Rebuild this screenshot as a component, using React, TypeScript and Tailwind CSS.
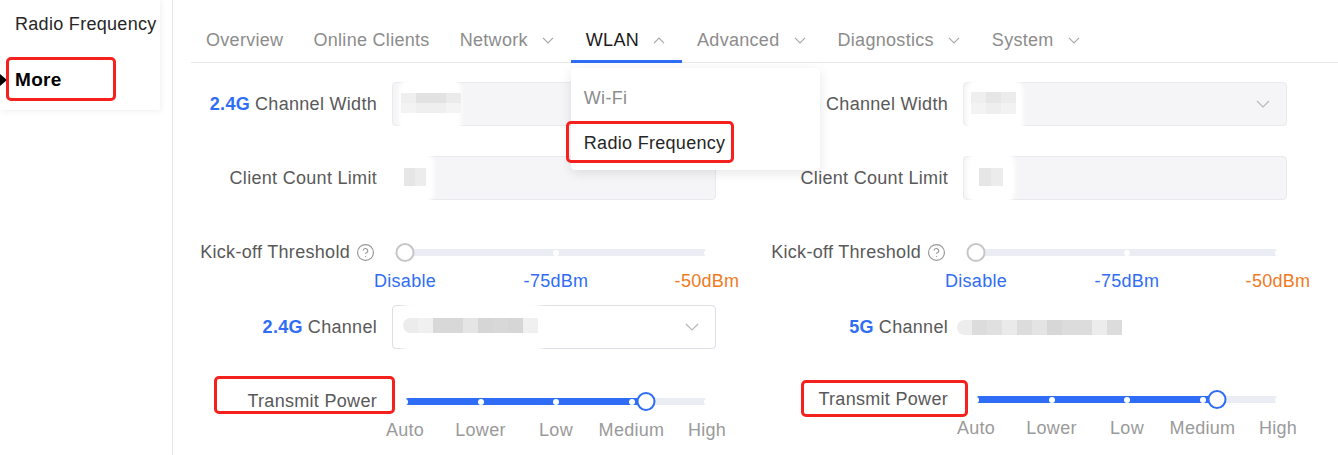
import { CircleHelp } from "lucide-react";
import type { ReactNode } from "react";

const tabs = [
  { label: "Overview" },
  { label: "Online Clients" },
  { label: "Network", menu: true },
  { label: "WLAN", menu: true, active: true },
  { label: "Advanced", menu: true },
  { label: "Diagnostics", menu: true },
  { label: "System", menu: true },
];

// blurred (redacted) values, one class per cell
const mosaicRow1 = ["bg-[#efefef]", "bg-[#e2e2e2]", "bg-[#e2e2e2]", "bg-[#ebebeb]"];
const mosaicRow1b = ["bg-[#f3f3f3]", "bg-[#efefef]", "bg-[#efefef]", "bg-[#f4f4f4]"];
const mosaicCount = ["bg-[#e6e6e6]", "bg-[#ececec]"];
const mosaicChan24 = ["bg-[#ececec]", "bg-[#f0f0f0]", "bg-[#d8d8d8]", "bg-[#d8d8d8]", "bg-[#e5e5e5]", "bg-[#d6d6d6]", "bg-[#d8d8d8]", "bg-[#d6d6d6]", "bg-[#f0f0f0]"];
const mosaicChan5 = ["bg-[#ededed]", "bg-[#dcdcdc]", "bg-[#e0e0e0]", "bg-[#eaeaea]", "bg-[#dcdcdc]", "bg-[#e4e4e4]", "bg-[#d7d7d7]", "bg-[#dcdcdc]", "bg-[#dcdcdc]", "bg-[#ececec]", "bg-[#dcdcdc]"];

function Chevron({ up = false, className = "" }: { up?: boolean; className?: string }) {
  return (
    <svg width="12" height="7" viewBox="0 0 12 7" fill="none" className={className}>
      <path d={up ? "M1 6.2L6 1.2l5 5" : "M1 0.8l5 5 5-5"} stroke="currentColor" strokeWidth="1.2" />
    </svg>
  );
}

function Mosaic({ cells, className = "" }: { cells: string[]; className?: string }) {
  return (
    <div className={`flex ${className}`}>
      {cells.map((c, i) => (
        <div key={i} className={`h-[15px] w-[15px] ${c}`} />
      ))}
    </div>
  );
}

function Sidebar() {
  return (
    <aside className="relative h-[110px] w-[160px] shrink-0 bg-white shadow-[1px_1px_6px_rgba(0,0,0,0.07)]">
      <div className="flex h-[48px] items-center pl-[15px] text-[#262626]">Radio Frequency</div>
      <div className="mt-[8px] flex h-[48px] items-center">
        <svg width="7" height="12" viewBox="0 0 7 12">
          <path d="M0 0L7 6L0 12Z" fill="#000" />
        </svg>
        <span className="ml-[8px] text-[19px] font-bold text-black">More</span>
      </div>
      <div className="absolute left-[6px] top-[57px] h-[44px] w-[110px] rounded-[5px] border-[3px] border-[#f5211f]" />
    </aside>
  );
}

function Dropdown() {
  return (
    <div className="absolute left-0 top-[50px] z-20 h-[102px] w-[249px] rounded-[4px] bg-white py-[8px] shadow-[0_3px_12px_rgba(0,0,0,0.1)]">
      <div className="flex h-[45px] items-center pl-[13px] text-[#8c8c8c]">Wi-Fi</div>
      <div className="flex h-[45px] items-center pl-[13px] text-[#262626]">Radio Frequency</div>
      <div className="absolute -left-[5px] top-[53px] h-[42px] w-[168px] rounded-[5px] border-[3px] border-[#f5211f]" />
    </div>
  );
}

function Tabs() {
  return (
    <nav className="mt-[18px] flex border-b border-[#e8e8e8]">
      {tabs.map((t) => (
        <div
          key={t.label}
          className={`relative flex h-[44px] items-center px-[15px] ${t.active ? "text-[#1a1a1a]" : "text-[#8c8c8c]"}`}
        >
          <span>{t.label}</span>
          {t.menu && <Chevron up={t.active} className="ml-[14px] mr-[2px] text-[#a8a8a8]" />}
          {t.active && <div className="absolute -bottom-px left-0 right-0 h-[3px] bg-[#2f6df6]" />}
          {t.active && <Dropdown />}
        </div>
      ))}
    </nav>
  );
}

function Row({ label, children, className = "", tall = true }: { label: ReactNode; children?: ReactNode; className?: string; tall?: boolean }) {
  return (
    <div className={`relative flex items-start ${className}`}>
      <div className={`flex w-[186px] shrink-0 items-center justify-end whitespace-nowrap text-[#595959] ${tall ? "h-[44px]" : "h-[20px]"}`}>
        {label}
      </div>
      <div className="relative ml-[15px] w-[324px]">{children}</div>
    </div>
  );
}

function Field({ white = false, chevron = false, children }: { white?: boolean; chevron?: boolean; children?: ReactNode }) {
  return (
    <div
      className={`relative flex h-[44px] items-center justify-end rounded-[4px] border pr-[16px] ${
        white ? "border-[#dcdfe6] bg-white" : "border-[#e9eaee] bg-[#f5f5f7]"
      }`}
    >
      {children}
      {chevron && (
        <svg width="14" height="8" viewBox="0 0 14 8" fill="none" className="text-[#b8b8b8]">
          <path d="M1 1l6 6 6-6" stroke="currentColor" strokeWidth="1.2" />
        </svg>
      )}
    </div>
  );
}

type Label = { text: string; color: string };

function Slider({ points, value, filled, labels }: { points: number[]; value: number; filled: boolean; labels: Label[] }) {
  const start = points[0];
  const end = points[points.length - 1];
  return (
    <div>
      <div className="relative h-[20px]">
        <div className="absolute top-[7px] h-[7px] rounded-full bg-[#ebedf4]" style={{ left: start, width: end - start }} />
        {filled && (
          <div className="absolute top-[7px] h-[7px] rounded-l-full bg-[#2f6df6]" style={{ left: start, width: value - start }} />
        )}
        {points.map((x) => (
          <div key={x} className="absolute top-[7.5px] h-[6px] w-[6px] -translate-x-1/2 rounded-full bg-white" style={{ left: x }} />
        ))}
        <div
          className={`absolute top-px h-[19px] w-[19px] -translate-x-1/2 rounded-full border-2 bg-white ${
            filled ? "border-[#2f6df6]" : "border-[#c6c6c6]"
          }`}
          style={{ left: value }}
        />
      </div>
      <div className="relative mt-[7px] h-[24px]">
        {labels.map((l, i) => (
          <span
            key={l.text}
            className={`absolute top-0 -translate-x-1/2 whitespace-nowrap leading-[24px] ${l.color}`}
            style={{ left: points[i] }}
          >
            {l.text}
          </span>
        ))}
      </div>
    </div>
  );
}

const kickPoints = [13, 164, 315];
const kickLabels = [
  { text: "Disable", color: "text-[#2f6df6]" },
  { text: "-75dBm", color: "text-[#2f6df6]" },
  { text: "-50dBm", color: "text-[#f07a1e]" },
];
const powerPoints = [13, 88.5, 164, 239.5, 315];
const powerLabels = ["Auto", "Lower", "Low", "Medium", "High"].map((text) => ({ text, color: "text-[#9a9a9a]" }));

function Band({ name }: { name: string }) {
  return <span className="mr-[5px] font-bold text-[#2f6df6]">{name}</span>;
}

function KickLabel() {
  return (
    <span className="flex items-center pr-[2px]">
      Kick-off Threshold
      <CircleHelp size={19} strokeWidth={1.5} className="ml-[6px] text-[#9a9a9a]" />
    </span>
  );
}

function LeftColumn() {
  return (
    <div className="flex flex-col">
      <Row className="mt-[19px]" label={<><Band name="2.4G" />Channel Width</>}>
        <Field />
        <div className="absolute left-[7px] -top-[4px] h-[58px] w-[62px] rounded-[12px] bg-white blur-[2px]" />
        <div className="absolute left-[9px] top-[11px]">
          <Mosaic cells={mosaicRow1} className="[&>div]:h-[10px]" />
          <Mosaic cells={mosaicRow1b} className="[&>div]:h-[10px]" />
        </div>
      </Row>
      <Row className="mt-[30px]" label="Client Count Limit">
        <Field />
        <div className="absolute -left-[14px] -top-[4px] h-[52px] w-[56px] rounded-[12px] bg-white blur-[2px]" />
        <Mosaic cells={mosaicCount} className="absolute left-[12px] top-[12px] [&>div]:h-[18px] [&>div]:w-[11px]" />
      </Row>
      <Row className="mt-[42px]" tall={false} label={<KickLabel />}>
        <Slider points={kickPoints} value={13} filled={false} labels={kickLabels} />
      </Row>
      <Row className="mt-[12px]" label={<><Band name="2.4G" />Channel</>}>
        <Field white chevron />
        <div className="absolute left-[8px] -top-[3px] h-[52px] w-[145px] rounded-[14px] bg-white blur-[2px]" />
        <Mosaic cells={mosaicChan24} className="absolute left-[11px] top-[13px] rounded-l-[8px] overflow-hidden" />
      </Row>
      <Row className="mt-[42px]" tall={false} label="Transmit Power">
        <Slider points={powerPoints} value={254} filled labels={powerLabels} />
      </Row>
      <div className="pointer-events-none relative">
        <div className="absolute -top-[66px] left-[23px] h-[38px] w-[181px] rounded-[5px] border-[3px] border-[#f5211f]" />
      </div>
    </div>
  );
}

function RightColumn() {
  return (
    <div className="flex flex-col">
      <Row className="mt-[19px]" label={<><Band name="5G" />Channel Width</>}>
        <Field chevron />
        <div className="absolute left-[4px] -top-[4px] h-[58px] w-[56px] rounded-[12px] bg-white blur-[2px]" />
        <div className="absolute left-[8px] top-[10px]">
          <Mosaic cells={["bg-[#efefef]", "bg-[#e6e6e6]", "bg-[#ececec]"]} className="[&>div]:h-[11px]" />
          <Mosaic cells={["bg-[#f3f3f3]", "bg-[#eeeeee]", "bg-[#f2f2f2]"]} className="[&>div]:h-[11px]" />
        </div>
      </Row>
      <Row className="mt-[30px]" label="Client Count Limit">
        <Field />
        <div className="absolute left-[4px] -top-[4px] h-[52px] w-[48px] rounded-[12px] bg-white blur-[2px]" />
        <Mosaic cells={mosaicCount} className="absolute left-[16px] top-[12px] [&>div]:h-[18px] [&>div]:w-[12px]" />
      </Row>
      <Row className="mt-[42px]" tall={false} label={<KickLabel />}>
        <Slider points={kickPoints} value={13} filled={false} labels={kickLabels} />
      </Row>
      <Row className="mt-[12px]" label={<><Band name="5G" />Channel</>}>
        <div className="flex h-[44px] items-center">
          <Mosaic cells={mosaicChan5} className="-ml-[6px] overflow-hidden rounded-l-[10px]" />
        </div>
      </Row>
      <Row className="mt-[40px]" tall={false} label="Transmit Power">
        <Slider points={powerPoints} value={254} filled labels={powerLabels} />
      </Row>
      <div className="pointer-events-none relative">
        <div className="absolute -top-[60px] left-[39px] h-[37px] w-[167px] rounded-[5px] border-[3px] border-[#f5211f]" />
      </div>
    </div>
  );
}

export default function App() {
  return (
    <div className="flex h-[455px] w-[1338px] overflow-hidden bg-white font-['Liberation_Sans',Arial,sans-serif] text-[18px] tracking-[0.3px]">
      <Sidebar />
      <main className="ml-[12px] min-w-0 flex-1 border-l border-[#e6e6e6] pl-[18px]">
        <Tabs />
        <div className="grid grid-cols-[571px_571px]">
          <LeftColumn />
          <RightColumn />
        </div>
      </main>
    </div>
  );
}
